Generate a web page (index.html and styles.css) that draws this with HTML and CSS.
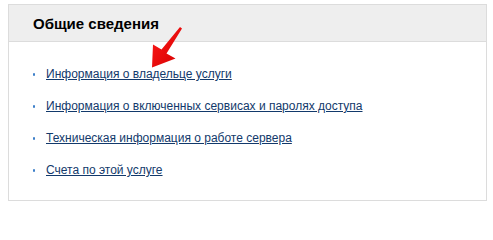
FILE: index.html
```html
<!DOCTYPE html>
<html lang="ru">
<head>
<meta charset="utf-8">
<title>Общие сведения</title>
<link rel="stylesheet" href="styles.css">
</head>
<body>
<div class="panel">
  <div class="panel-head">Общие сведения</div>
  <ul class="links">
    <li><span class="dot"></span><a href="#">Информация о владельце услуги</a></li>
    <li><span class="dot"></span><a href="#">Информация о включенных сервисах и паролях доступа</a></li>
    <li><span class="dot"></span><a href="#">Техническая информация о работе сервера</a></li>
    <li><span class="dot"></span><a href="#">Счета по этой услуге</a></li>
  </ul>
  <svg class="arrow" width="40" height="48" viewBox="148 24 40 48" aria-hidden="true">
    <defs>
      <linearGradient id="ag" x1="0" y1="0" x2="1" y2="1">
        <stop offset="0" stop-color="#ff1a1a"/>
        <stop offset="1" stop-color="#d40000"/>
      </linearGradient>
    </defs>
    <polygon fill="url(#ag)" points="182,28.5 166.5,53.5 175.5,58.5 152,67.5 153,44.5 161.5,49.5 180,27"/>
  </svg>
</div>
</body>
</html>
```
FILE: styles.css
```css
html, body {
  margin: 0;
  padding: 0;
  background: #fff;
}
body {
  font-family: "Liberation Sans", Arial, sans-serif;
}
.panel {
  position: relative;
  margin: 4px 0 0 8px;
  width: 477px;
  border: 1px solid #dcdcdc;
  background: #fff;
}
.panel-head {
  height: 36px;
  display: flex;
  align-items: center;
  padding-left: 24px;
  background: #eeeeee;
  border-bottom: 1px solid #dcdcdc;
  font-size: 15px;
  font-weight: bold;
  color: #000;
}
.links {
  list-style: none;
  margin: 0;
  padding: 16px 0 14px 24px;
}
.links li {
  display: flex;
  align-items: center;
  gap: 11px;
  height: 32px;
  font-size: 12px;
  line-height: 16px;
}
.dot {
  width: 2px;
  height: 3px;
  background: #3d7fc9;
  border-radius: 1px;
  flex: none;
}
.links a {
  color: #12396b;
  text-decoration: underline;
}
.arrow {
  position: absolute;
  left: 139px;
  top: 19px;
  pointer-events: none;
}
```
